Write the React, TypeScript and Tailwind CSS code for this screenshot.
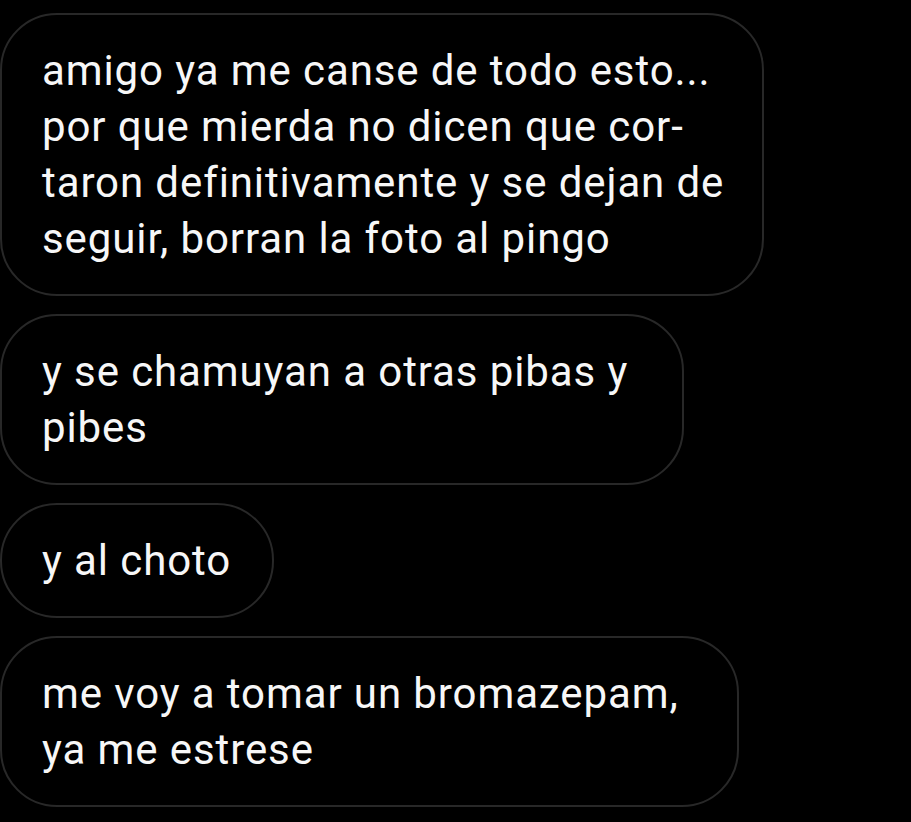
const messages = [
  {
    lines: [
      "amigo ya me canse de todo esto...",
      "por que mierda no dicen que cor-",
      "taron definitivamente y se dejan de",
      "seguir, borran la foto al pingo",
    ],
    width: "w-[764px]",
  },
  { lines: ["y se chamuyan a otras pibas y", "pibes"], width: "w-[684px]" },
  { lines: ["y al choto"], width: "w-[274px]" },
  { lines: ["me voy a tomar un bromazepam,", "ya me estrese"], width: "w-[739px]" },
];

const Bubble = ({ lines, width }: { lines: string[]; width: string }) => (
  <div
    className={`${width} rounded-[57px] border-2 border-[#282828] bg-black pl-[40px] pr-6 pt-[28px] pb-[27px] text-[42px] leading-[56px] tracking-[0.9px] text-[#f7f7f7]`}
  >
    {lines.map((line, i) => (
      <div key={i} className="whitespace-nowrap">
        {line}
      </div>
    ))}
  </div>
);

export default function App() {
  return (
    <div
      className="w-[911px] h-[822px] overflow-hidden bg-black flex flex-col items-start gap-[18px] pt-[13px]"
      style={{ fontFamily: "Roboto, 'Noto Sans', sans-serif" }}
    >
      {messages.map((m, i) => (
        <Bubble key={i} lines={m.lines} width={m.width} />
      ))}
    </div>
  );
}
